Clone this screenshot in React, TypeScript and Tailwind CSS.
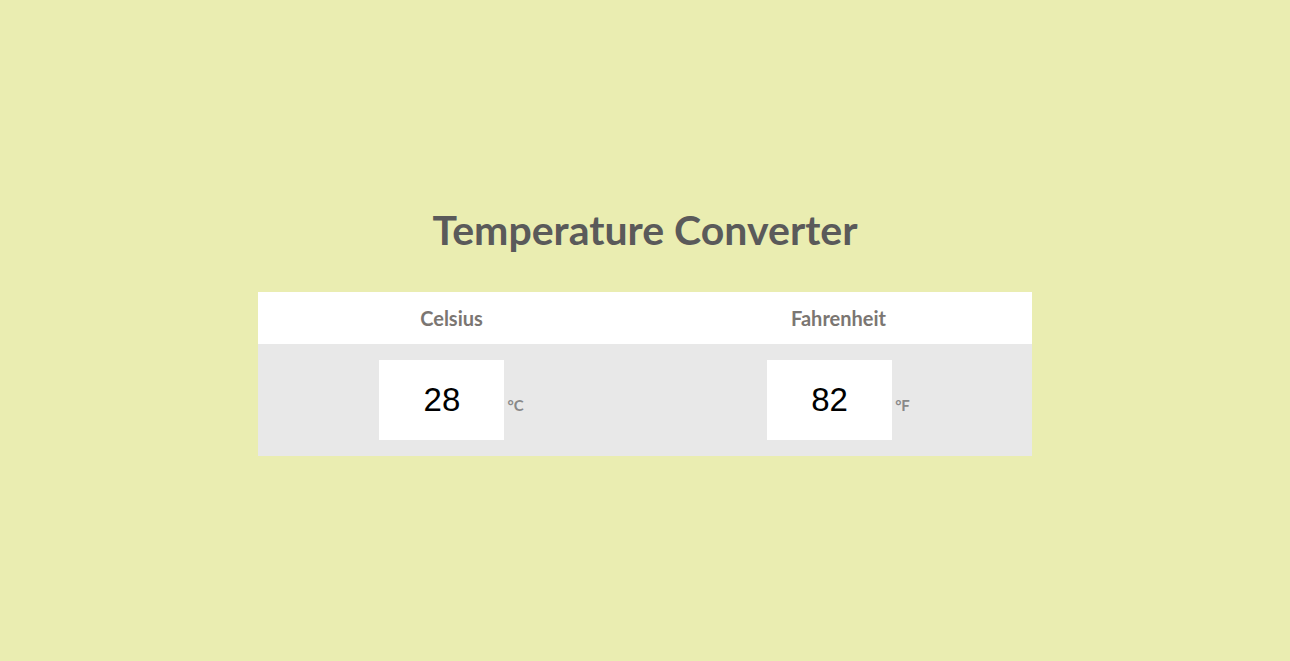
import { useState } from "react";

function Cell({ value, unit, onChange }: { value: string; unit: string; onChange: (v: string) => void }) {
  return (
    <td className="py-4 text-center">
      <input
        value={value}
        onChange={(e) => onChange(e.target.value)}
        className="h-20 w-[125px] bg-white text-center text-[33px] text-black outline-none font-['Liberation_Sans',Arial,sans-serif] align-baseline"
      />
      <span className="ml-[3px] text-[15px] font-bold text-[#888] align-baseline">{unit}</span>
    </td>
  );
}

export default function App() {
  const [c, setC] = useState("28");
  const [f, setF] = useState("82");

  return (
    <div className="min-h-[661px] bg-[#eaedb1] pt-[204px] font-['Lato',sans-serif]">
      <h1 className="text-center text-[41px] font-bold leading-[52px] text-[#5a5a5a]">
        Temperature Converter
      </h1>
      <table className="mx-auto mt-9 w-[774px] table-fixed border-collapse">
        <thead>
          <tr className="bg-white h-[52px]">
            <th className="text-[20px] font-bold text-[#7b7672]">Celsius</th>
            <th className="text-[20px] font-bold text-[#7b7672]">Fahrenheit</th>
          </tr>
        </thead>
        <tbody>
          <tr className="bg-[#e8e8e8]">
            <Cell
              value={c}
              unit="°C"
              onChange={(v) => {
                setC(v);
                const n = parseFloat(v);
                if (!isNaN(n)) setF(String(Math.round((n * 9) / 5 + 32)));
              }}
            />
            <Cell
              value={f}
              unit="°F"
              onChange={(v) => {
                setF(v);
                const n = parseFloat(v);
                if (!isNaN(n)) setC(String(Math.round(((n - 32) * 5) / 9)));
              }}
            />
          </tr>
        </tbody>
      </table>
    </div>
  );
}
